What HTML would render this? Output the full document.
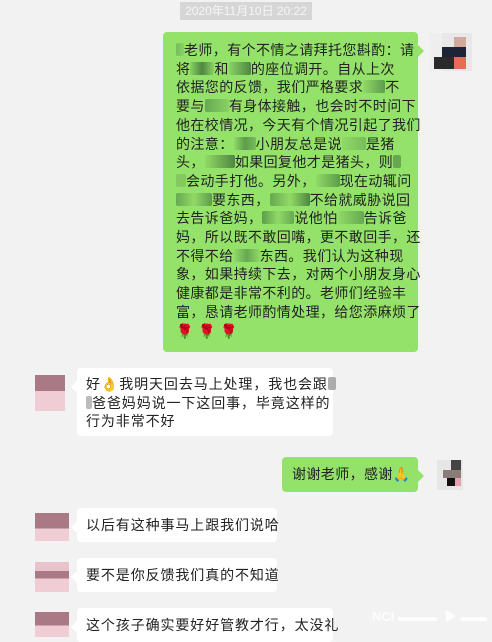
<!DOCTYPE html>
<html><head><meta charset="utf-8"><style>
*{margin:0;padding:0;box-sizing:border-box}
body{width:492px;height:637px;overflow:hidden;background:#f2f2f2;font-family:"Liberation Sans","Noto Sans CJK SC",sans-serif;color:#222;position:relative}
.ts{position:absolute;left:180px;top:2px;width:132px;height:18px;background:#d6d6d6;color:#f6f6f6;font-size:12px;line-height:18px;text-align:center}
.b{position:absolute;border-radius:4px;font-size:14px;line-height:18.7px;white-space:nowrap;letter-spacing:.4px}
.g{background:#95e26a}
.w{background:#fff;letter-spacing:.9px}
.b.g:after{content:"";position:absolute;right:-6px;top:13px;border:6px solid transparent;border-right:0;border-left-color:#95e26a}
.b.w:before{content:"";position:absolute;left:-6px;top:13px;border:6px solid transparent;border-left:0;border-right-color:#fff}
.m{display:inline-block;height:13px;vertical-align:-1px;border-radius:2px;opacity:.8}
.av{position:absolute}
</style></head><body>
<div class="ts">2020年11月10日 20:22</div>

<div class="b g" style="left:163px;top:32px;width:255px;height:320px;padding:9px 0 0 13px;">
<span class="m" style="width:8px;background:linear-gradient(90deg,#6fb35a,#86cf62)"></span>老师，有个不情之请拜托您斟酌：请<br>
将<span class="m" style="width:24px;background:linear-gradient(90deg,#86cf62,#3d6f38,#86cf62)"></span>和<span class="m" style="width:22px;background:linear-gradient(90deg,#86cf62,#3d6f38)"></span>的座位调开。自从上次<br>
依据您的反馈，我们严格要求<span class="m" style="width:22px;background:linear-gradient(90deg,#8fd865,#4f8a44)"></span>不<br>
要与<span class="m" style="width:24px;background:linear-gradient(90deg,#5a9a4c,#86cf62)"></span>有身体接触，也会时不时问下<br>
他在校情况，今天有个情况引起了我们<br>
的注意：<span class="m" style="width:22px;background:linear-gradient(90deg,#8fd865,#4f8a44,#6fb35a)"></span>小朋友总是说<span class="m" style="width:24px;background:linear-gradient(90deg,#8fd865,#6fb35a)"></span>是猪<br>
头，<span class="m" style="width:30px;background:linear-gradient(90deg,#8fd865,#3d6f38)"></span>如果回复他才是猪头，则<span class="m" style="width:8px;background:#5a9a4c"></span><br>
<span class="m" style="width:10px;background:#7fc25c"></span>会动手打他。另外，<span class="m" style="width:24px;background:linear-gradient(90deg,#8fd865,#4f8a44)"></span>现在动辄问<br>
<span class="m" style="width:36px;background:linear-gradient(90deg,#5a9a4c,#8fd865,#4f8a44)"></span>要东西，<span class="m" style="width:40px;background:linear-gradient(90deg,#5a9a4c,#8fd865,#3d6f38)"></span>不给就威胁说回<br>
去告诉爸妈，<span class="m" style="width:32px;background:linear-gradient(90deg,#4f8a44,#8fd865,#5a9a4c)"></span>说他怕<span class="m" style="width:26px;background:linear-gradient(90deg,#8fd865,#5a9a4c)"></span>告诉爸<br>
妈，所以既不敢回嘴，更不敢回手，还<br>
不得不给<span class="m" style="width:26px;background:linear-gradient(90deg,#8fd865,#5a9a4c,#8fd865)"></span>东西。我们认为这种现<br>
象，如果持续下去，对两个小朋友身心<br>
健康都是非常不利的。老师们经验丰<br>
富，恳请老师酌情处理，给您添麻烦了<br>
<span style="color:#c8301e">🌹 🌹 🌹</span>
</div>
<div class="av" style="left:430px;top:33px;width:42px;height:38px;background:#eee">
<div style="position:absolute;left:12px;top:0;width:30px;height:38px;background:#e8e8e8"></div>
<div style="position:absolute;left:24px;top:4px;width:12px;height:10px;background:#d4a89a"></div>
<div style="position:absolute;left:12px;top:14px;width:24px;height:10px;background:#1e2438"></div>
<div style="position:absolute;left:4px;top:24px;width:20px;height:12px;background:#2a2a2a"></div>
<div style="position:absolute;left:24px;top:24px;width:12px;height:12px;background:#e66c55"></div>
</div>

<div class="av" style="left:35px;top:375px;width:30px;height:36px;background:linear-gradient(#a97a86 0 45%,#f0cdd5 45%)"></div>
<div class="b w" style="left:77px;top:368px;width:256px;height:68px;padding:7px 0 0 9px;">好👌我明天回去马上处理，我也会跟<span class="m" style="width:8px;background:#999"></span><br><span class="m" style="width:6px;background:#aaa"></span>爸爸妈妈说一下这回事，毕竟这样的<br>行为非常不好</div>

<div class="b g" style="left:282px;top:457px;width:136px;height:35px;padding:8px 0 0 10px;">谢谢老师，感谢🙏</div>
<div class="av" style="left:437px;top:460px;width:26px;height:30px;background:#e6e6e6">
<div style="position:absolute;left:14px;top:0;width:10px;height:10px;background:#444"></div>
<div style="position:absolute;left:6px;top:10px;width:18px;height:8px;background:#8a7c78"></div>
<div style="position:absolute;left:10px;top:18px;width:8px;height:8px;background:#111"></div>
<div style="position:absolute;left:18px;top:18px;width:6px;height:8px;background:#e8a0b0"></div>
</div>

<div class="av" style="left:35px;top:513px;width:34px;height:28px;background:linear-gradient(#a97a86 0 55%,#f0cdd5 55%)"></div>
<div class="b w" style="left:77px;top:508px;width:200px;height:34px;padding:8px 0 0 9px;">以后有这种事马上跟我们说哈</div>

<div class="av" style="left:35px;top:562px;width:34px;height:30px;background:linear-gradient(#e9c3cc 0 30%,#a97a86 30% 55%,#f0cdd5 55%)"></div>
<div class="b w" style="left:77px;top:558px;width:200px;height:34px;padding:8px 0 0 9px;">要不是你反馈我们真的不知道</div>

<div class="av" style="left:35px;top:612px;width:34px;height:25px;background:linear-gradient(#a97a86 0 55%,#f0cdd5 55%)"></div>
<div class="b w" style="left:77px;top:608px;width:256px;height:34px;padding:8px 0 0 9px;">这个孩子确实要好好管教才行，太没礼</div>

<div style="position:absolute;left:372px;top:606px;color:#fff;font-size:13px;font-weight:bold;opacity:.85">NCI ▬▬▬ &nbsp;▶ ▬▬</div>
</body></html>
